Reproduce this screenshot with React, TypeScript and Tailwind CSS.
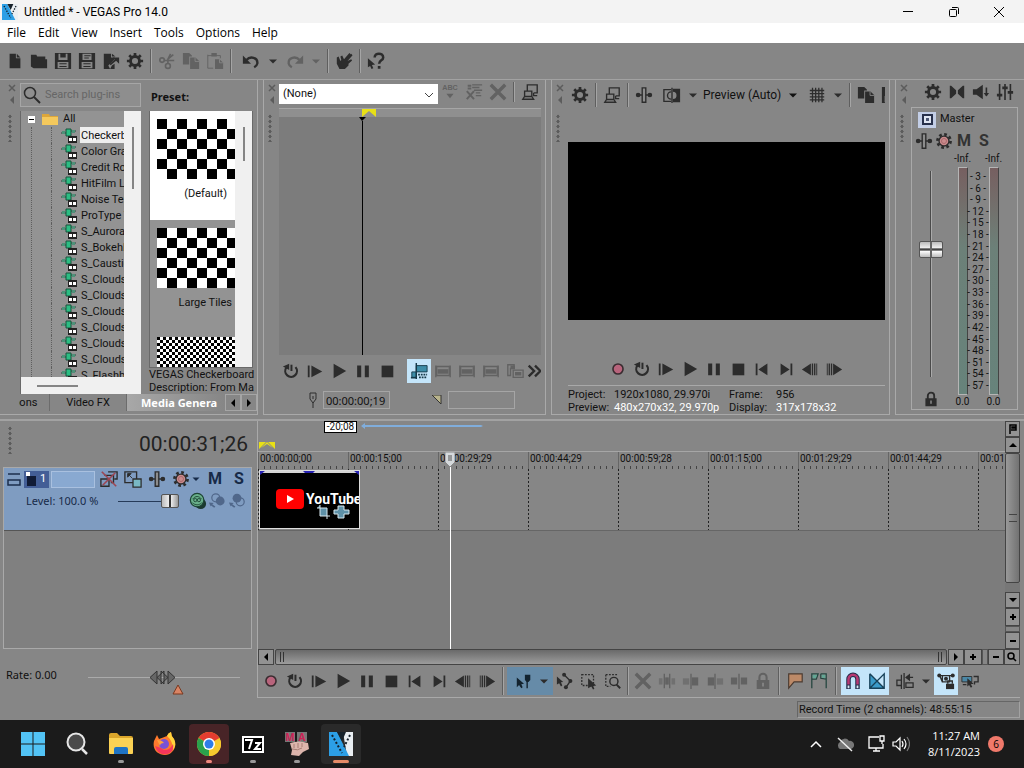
import { useState } from "react";
import type { ReactNode } from "react";
import clsx from "clsx";

const icons: Record<string, ReactNode> = {
  newFile: <path d="M4 2h7v5h5v11H4zM12 2l4 4h-4z" />,
  folder: <path d="M1 3h6l1 2h9v3H1zM1 7l2 1h16v10H4L1 16z" />,
  save: (
    <>
      <path fillRule="evenodd" d="M1 1h18v18H1zM5 2v7h10V2h-2v4H7V2zM4 11v7h12v-7z" />
      <path d="M8 2h3v3H8zM6 12.500h8v1.200H6zM6 15.500h8v1.200H6z" />
    </>
  ),
  saveAs: (
    <>
      <path fillRule="evenodd" d="M1 1h18v18H1zM5 2v7h10V2zM4 11v7h12v-7z" />
      <path d="M7 3.500h7v1.200H7zM7 6h5v1.200H7zM6 12.500h8v1.200H6zM6 15.500h8v1.200H6z" />
    </>
  ),
  render: (
    <>
      <path d="M2 2h8v4h4v2l-7 7 2 4H2zM11 2l4 3h-4zM11 15l3-2v6h-5z" />
      <path d="M9 14l7-6" stroke="currentColor" strokeWidth="2" />
      <path d="M12 6h7v7z" />
    </>
  ),
  gear: (
    <>
      <circle cx="10" cy="10" r="5" fill="none" stroke="currentColor" strokeWidth="3.2" />
      <path
        d="M10 1v4M10 15v4M1 10h4M15 10h4M3.600 3.600l2.800 2.800M13.600 13.600l2.800 2.800M3.600 16.400l2.800-2.800M13.600 6.400l2.800-2.800"
        stroke="currentColor"
        strokeWidth="3"
      />
    </>
  ),
  fxGear: (
    <>
      <circle cx="10" cy="10" r="7.300" fill="none" stroke="currentColor" strokeWidth="3" strokeDasharray="3 2.730" />
      <circle cx="10" cy="10" r="5.500" fill="#c98a8c" stroke="currentColor" strokeWidth="1.500" />
      <circle cx="10" cy="10" r="2.800" fill="none" stroke="#a5676a" />
    </>
  ),
  cut: (
    <g fill="none" stroke="currentColor" strokeWidth="1.800">
      <circle cx="4.500" cy="9" r="2.500" />
      <circle cx="11" cy="15.500" r="2.700" />
      <path d="M7 9.500h11M11 12.500V8l3-6M11 8l6-5" />
    </g>
  ),
  copy: (
    <>
      <path d="M1 1h7l3 3v1H8v9H1z" />
      <path d="M9 6h6l4 4v9H9z" />
      <path d="M14.500 6v4.500H19" stroke="#868686" fill="none" />
    </>
  ),
  paste: (
    <>
      <path d="M2 4h14v3M2 3v15h6" fill="none" stroke="currentColor" />
      <path d="M6 1h6v4H6zM10 8h5l4 4v7h-9z" />
      <path d="M15 8v4h4" stroke="#868686" fill="none" />
    </>
  ),
  undo: (
    <>
      <path d="M5 9c4-5 13-3 12 4-.300 2-2 3-3.500 4" fill="none" stroke="currentColor" strokeWidth="2.600" />
      <path d="M1 4v9h9z" />
    </>
  ),
  redo: (
    <>
      <path d="M15 9C11 4 2 6 3 13c.300 2 2 3 3.500 4" fill="none" stroke="currentColor" strokeWidth="2.600" />
      <path d="M19 4v9h-9z" />
    </>
  ),
  hand: (
    <path d="M2 6l2-1 2 5 1-1-1-4 2-1 2 4 6-7 1.500 1.500L13 8l5-6 1.500 1.500L14 10l4-2 1 1.500-4 3.500v2l-4 4H5l-3-6z" />
  ),
  help: (
    <>
      <path d="M8.500 6c0-5.500 9.500-5.500 9.500 0 0 3.500-4.500 3-4.500 7" fill="none" stroke="currentColor" strokeWidth="2.800" />
      <path d="M12 15.500h3v3h-3zM1 7l8 7-3.500.5 1.500 3.500-2 1L3.500 15.500 1 17z" />
    </>
  ),
  x: <path d="M2 2l16 16M18 2L2 18" stroke="currentColor" strokeWidth="3.800" />,
  abc: (
    <>
      <text x="10" y="8" textAnchor="middle" fontSize="8" fontWeight="bold" fontFamily="Liberation Sans, sans-serif">ABC</text>
      <path d="M6 12h8l-4 5z" />
    </>
  ),
  presetList: (
    <>
      <path d="M8 2h11M8 5h8M10 8h9M12 11h5M12 14h6" stroke="currentColor" strokeWidth="1.500" />
      <path d="M2 9l8 9M10 9l-8 9M3 3h4M3 6h4" stroke="currentColor" strokeWidth="2.200" />
    </>
  ),
  screens: (
    <g fill="none" stroke="currentColor" strokeWidth="1.500">
      <path d="M7 9V2h11v9h-4M14 11v3h4" />
      <path d="M4 9h8v6H4zM2 18h12l-2-3H4z" />
    </g>
  ),
  pin: (
    <>
      <path d="M2 10h16" stroke="currentColor" strokeWidth="1.500" />
      <path d="M8 2h4v16H8z" fill="#8c8c8c" stroke="currentColor" strokeWidth="1.500" />
      <circle cx="3.500" cy="10" r="2.600" />
      <circle cx="16.500" cy="10" r="2.600" />
    </>
  ),
  split: (
    <>
      <path d="M9 4H1v13h8" fill="none" stroke="currentColor" strokeWidth="1.500" />
      <path d="M11 3h8v15h-8v-3.500a4 4 0 000-8z" />
      <path d="M10 2v17M9 6.500a4 4 0 000 8" fill="none" stroke="currentColor" strokeWidth="1.500" />
    </>
  ),
  grid: <path d="M2 5h16M2 8.500h16M2 12h16M2 15.500h16M5 2v16M8.500 2v16M12 2v16M15.500 2v16" stroke="currentColor" strokeWidth="1.400" />,
  down: <path d="M5 8h10l-5 5z" />,
  record: <circle cx="10" cy="10" r="5.600" fill="#b8647c" stroke="#3a2c30" strokeWidth="1.800" />,
  loop: (
    <>
      <path d="M5 6a6.500 6.500 0 1010-.300" fill="none" stroke="currentColor" strokeWidth="2.400" />
      <path d="M10.500 3v7" stroke="currentColor" strokeWidth="2.200" />
      <path d="M1 5l7-3v7z" />
    </>
  ),
  playStart: <path d="M2 4h2v13H2zM6 4l12 6.500L6 17z" />,
  play: <path d="M4 2l14 8-14 8z" />,
  pause: <path d="M3.500 4h4.500v13H3.500zM12 4h4.500v13H12z" />,
  stop: <path d="M4 4h13v13H4z" />,
  toStart: <path d="M3 4h2v13H3zM16 4v13L6 10.500z" />,
  toEnd: <path d="M15 4h2v13h-2zM4 4v13l10-6.500z" />,
  prevFrame: <path d="M11 4v13L1 10.500zM12 4h1.500v13H12zM14.500 4H16v13h-1.500zM17 4h1v13h-1z" />,
  nextFrame: <path d="M9 4v13l10-6.500zM6.500 4H8v13H6.500zM4 4h1.500v13H4zM2 4h1v13H2z" />,
  speaker: (
    <>
      <path d="M1 7h4l7-5v16l-7-5H1z" />
      <path d="M16 5v9" stroke="currentColor" strokeWidth="1.800" />
      <path d="M13 11h6l-3 4z" />
    </>
  ),
  bowtie: <path d="M2 3h1.500l5.500 5v4l-5.500 5H2zM18 3h-1.500L11 8v4l5.500 5H18z" />,
  mixer: (
    <>
      <path d="M4 1v18M10 1v18M16 1v18" stroke="currentColor" strokeWidth="1.800" />
      <path d="M1 12h6v3H1zM7 4h6v3H7zM13 9h6v3h-6z" />
    </>
  ),
  lock: (
    <>
      <path d="M6 10V6a4 4 0 018 0v4" fill="none" stroke="currentColor" strokeWidth="2.300" />
      <path fillRule="evenodd" d="M3 9h14v10H3zM9 12v4h2v-4z" />
    </>
  ),
  syncCursor: (
    <>
      <path d="M2 11h5v6H2zM7 4h12v7H7z" fill="#3d8da8" stroke="#153848" />
      <path d="M7 1v18M1 17.500h6" stroke="#153848" strokeWidth="1.600" />
      <path d="M9 14h10M10 17h9" stroke="#153848" strokeWidth="2" strokeDasharray="2 1" />
    </>
  ),
  keyframe: (
    <>
      <path d="M3 5h14v10H3z" fill="none" stroke="currentColor" strokeWidth="1.400" />
      <path d="M2 4v13M18 4v13" stroke="currentColor" strokeWidth="1.500" />
      <path d="M4 8h12v5H4z" />
    </>
  ),
  keyCopy: (
    <>
      <path d="M2 3h7v4H5v8H2zM8 9h11v8H8z" fill="none" stroke="currentColor" strokeWidth="1.500" />
      <path d="M10 11h7v4h-7zM5 4h5v4H5z" />
    </>
  ),
  more: <path d="M3 4l6 6-6 6M10 4l6 6-6 6" fill="none" stroke="currentColor" strokeWidth="2.600" />,
  editTool: (
    <g fill="#13232f">
      <path d="M2 6l8 7-3 .5 1.500 3.500-1.500 1-2.500-3.500L2 17z" />
      <path d="M11 3h6v6l-2 2h-2l-2-2z" />
      <path d="M13.500 10v8" stroke="#13232f" strokeWidth="1.500" />
    </g>
  ),
  envTool: (
    <>
      <path d="M1 5l7 6-2.500.5 1.500 3.500-1.500 1-2-3.500L1 14z" />
      <path d="M9 3l7 7-5 7" fill="none" stroke="currentColor" strokeWidth="1.500" />
      <circle cx="9" cy="3" r="2.200" /><circle cx="16" cy="10" r="2.200" /><circle cx="11" cy="17" r="2.200" />
    </>
  ),
  selTool: (
    <>
      <path d="M2 3h13v12H2z" fill="none" stroke="currentColor" strokeWidth="1.400" strokeDasharray="2 1.500" />
      <path d="M9 7l9 8-3.500.5 1.500 3-1.500 1-2-3.500-3.500 2z" />
    </>
  ),
  zoomTool: (
    <>
      <path d="M2 3h14M2 3v13h5" fill="none" stroke="currentColor" strokeWidth="1.400" strokeDasharray="2 1.500" />
      <circle cx="11" cy="10.500" r="4.500" fill="none" stroke="currentColor" strokeWidth="1.600" />
      <path d="M14 14l4 4" stroke="currentColor" strokeWidth="2.200" />
    </>
  ),
  trim: (
    <>
      <path d="M7 2v16M13 2v16" stroke="currentColor" strokeWidth="1.500" />
      <path d="M8 6h4v8H8z" />
      <path d="M1 7h4v7H1zM15 7h4v7h-4z" opacity=".6" />
    </>
  ),
  trimStart: (
    <>
      <path d="M10 2v17" stroke="currentColor" strokeWidth="1.500" />
      <path d="M11 6h7v9h-7z" /><path d="M1 7h7v7H1z" opacity=".6" />
    </>
  ),
  trimEnd: (
    <>
      <path d="M10 2v17" stroke="currentColor" strokeWidth="1.500" />
      <path d="M2 6h7v9H2z" /><path d="M12 7h7v7h-7z" opacity=".6" />
    </>
  ),
  cutEvent: (
    <>
      <path d="M10 2v17" stroke="currentColor" strokeWidth="1.500" />
      <path d="M1 6h7v8H1zM12 6h7v8h-7z" />
    </>
  ),
  marker: <path d="M3 2h15v9H9l-6 7z" fill="#bd8a68" stroke="#4a3a30" strokeWidth="1.300" />,
  region: (
    <>
      <path d="M2 18V2h7l-2 6H2zM12 2h6v16M12 2v5l6 1" fill="none" stroke="#24453f" strokeWidth="1.400" />
      <path d="M3 3h5l-1.500 4H3zM13 3h4v4l-4-1z" fill="#62a794" />
    </>
  ),
  magnet: (
    <>
      <path d="M5 19V8a5 5 0 0110 0v11" fill="none" stroke="#222e4c" strokeWidth="5" />
      <path d="M5 14V8a5 5 0 0110 0v6" fill="none" stroke="#b73872" strokeWidth="2.800" />
      <path d="M4 15h2v3H4zM14 15h2v3h-2z" fill="#dbe8f4" />
    </>
  ),
  crossfade: (
    <>
      <path d="M2 2v16h16z" fill="#3b9bc9" />
      <path d="M2 2v16h16V2L2 18M2 2l16 16" fill="none" stroke="#174158" strokeWidth="1.500" />
    </>
  ),
  ripple: (
    <>
      <path d="M1 9h5v6H1zM11 12h8v5h-8zM6 3v16M9 1v18" fill="none" stroke="currentColor" strokeWidth="1.400" />
      <path d="M11 6h8M11 6l4-3v6z" stroke="currentColor" strokeWidth="1.200" />
    </>
  ),
  lockEnv: (
    <>
      <path d="M1 4h18M6 4h8v7H6zM3 4l3 7" fill="none" stroke="currentColor" strokeWidth="1.500" />
      <circle cx="2.500" cy="4" r="2.200" /><circle cx="17.500" cy="4" r="2.200" /><circle cx="10" cy="7.500" r="2.200" />
      <path d="M10 13h9v6h-9z" />
      <path d="M12 13v-3h5v3" fill="none" stroke="currentColor" strokeWidth="1.500" />
    </>
  ),
  ignoreGroup: (
    <>
      <path d="M1 5h11v6H1z" fill="#4b87a5" stroke="currentColor" />
      <path d="M14 5h5v6h-4v3M2 14h4" fill="none" stroke="currentColor" strokeWidth="1.500" />
      <path d="M7 7l7 6-3 .5 1.500 3-1.500 1-2-3-2 1.500z" />
    </>
  ),
  bypass: (
    <>
      <path d="M9 2h10v8h-3M5 6h10v8h-3M1 10h9v8H1z" fill="none" stroke="currentColor" strokeWidth="1.500" />
      <path d="M2 2l16 16M17 3L3 17" stroke="#9c4653" strokeWidth="1.800" />
    </>
  ),
  motion: (
    <>
      <path d="M1 2h13v12H1z" fill="none" stroke="currentColor" strokeWidth="1.500" />
      <path d="M10 10h9v9h-9z" fill="#79b8c4" stroke="currentColor" strokeWidth="1.400" />
      <path d="M4 4h4L4 8zM5 5l4 4" stroke="currentColor" />
    </>
  ),
  compose: (
    <>
      <circle cx="13" cy="13" r="6" fill="#1b3930" />
      <circle cx="9" cy="9" r="7.500" fill="#69b08b" stroke="#1d4436" strokeWidth="1.400" />
      <path d="M4 8c3-4 7-4 10 0M4 12c3 3 7 3 10 0" fill="none" stroke="#1d4436" />
      <circle cx="7" cy="9" r="1.800" fill="none" stroke="#1d4436" /><circle cx="11" cy="9" r="1.800" fill="none" stroke="#1d4436" />
    </>
  ),
  parent: (
    <>
      <circle cx="8.500" cy="6" r="5" fill="none" stroke="currentColor" strokeWidth="1.500" />
      <circle cx="14" cy="10" r="5.500" />
      <path d="M0 12l6 .500-2 1.500 4 3-1.500 1.500-4-3L2 17z" />
    </>
  ),
  child: (
    <>
      <circle cx="14" cy="11" r="5" fill="none" stroke="currentColor" strokeWidth="1.500" />
      <circle cx="10" cy="6.500" r="5.500" />
      <path d="M0 12l6 .500-2 1.500 4 3-1.500 1.500-4-3L2 17z" />
    </>
  ),
};

function Glyph({ name, className = "size-5" }: { name: string; className?: string }) {
  return (
    <svg viewBox="0 0 20 20" fill="currentColor" aria-hidden="true" className={clsx("shrink-0", className)}>
      {icons[name]}
    </svg>
  );
}

type ToolProps = { name: string; label: string; off?: boolean; on?: boolean; className?: string };

function Tool({ name, label, off, on, className = "w-6" }: ToolProps) {
  return (
    <button
      type="button"
      aria-label={label}
      disabled={off}
      className={clsx(
        "flex h-6 shrink-0 items-center justify-center",
        off ? "text-[#626262]" : "text-[#2c2c2c]",
        on && "bg-[#c4e5fa]",
        className
      )}
    >
      <Glyph name={name} className={name === "down" ? "size-4" : "size-[18px]"} />
    </button>
  );
}

function Sep({ className = "mx-[3px] h-6" }: { className?: string }) {
  return <span className={clsx("w-[2px] shrink-0 border-l border-[#5f5f5f] bg-[#a5a5a5]", className)} />;
}

function Dots({ className }: { className?: string }) {
  return (
    <span className={clsx("h-7 w-1 bg-[radial-gradient(#5c5c5c_50%,transparent_60%)] bg-[length:4px_5px]", className)} />
  );
}

function Grip() {
  return (
    <div className="flex w-[15px] shrink-0 flex-col items-start pl-1 pt-1 text-[#5c5c5c]">
      <button type="button" aria-label="Close panel">
        <svg viewBox="0 0 8 8" className="size-2">
          <path d="M1 1l6 6M7 1L1 7" stroke="currentColor" strokeWidth="1.500" />
        </svg>
      </button>
      <button type="button" aria-label="Collapse panel" className="mt-1">
        <svg viewBox="0 0 8 8" fill="currentColor" className="size-2">
          <path d="M6 0v8L2 4z" />
        </svg>
      </button>
      <Dots className="mt-2.5" />
    </div>
  );
}

const plugins = [
  "Checkerboard", "Color Gradient", "Credit Roll", "HitFilm Light", "Noise Texture", "ProType Titler",
  "S_Aurora", "S_BokehLights", "S_Caustics", "S_Clouds", "S_CloudsColor", "S_CloudsMult", "S_CloudsPers",
  "S_CloudsPsyko", "S_CloudsVortex", "S_Flashbulbs",
];

function PluginIcon() {
  return (
    <svg viewBox="0 0 16 16" className="size-4 shrink-0">
      <path d="M0 6h5M10 4h5" stroke="#25463b" />
      <path d="M1 4h3v3H1zM11 3h3v3h-3z" fill="#4f9179" />
      <path d="M5 2h5v7H5z" fill="#2bbd83" stroke="#17543d" />
      <path d="M7 9h9v7H7z" fill="#222" />
      <path d="M8 11h3v3H8zM12 11h3v3h-3z" fill="#fff" />
    </svg>
  );
}

function PluginPanel() {
  const [selected, setSelected] = useState("Checkerboard");

  return (
    <section className="mb-1 flex w-[258px] shrink-0 border-r border-b border-[#a9a9a9] pl-1">
      <Grip />
      <div className="flex min-w-0 flex-1 flex-col">
        <div className="flex min-h-0 flex-1 gap-2 pl-px pr-1 pt-[3px]">
          <div className="flex w-[121px] shrink-0 flex-col gap-1">
            <label className="flex h-6 shrink-0 items-center border border-[#a6a6a6] bg-[#8e8e8e] pl-0.5">
              <svg viewBox="0 0 18 18" className="size-[18px] shrink-0" fill="none" stroke="#2c2c2c">
                <circle cx="7" cy="7" r="5.500" strokeWidth="1.500" />
                <path d="M11 11l6 6" strokeWidth="2" />
              </svg>
              <input
                type="search"
                aria-label="Search plug-ins"
                placeholder="Search plug-ins"
                className="ml-1 w-full min-w-0 bg-transparent text-[11px] outline-none placeholder:text-[#666]"
              />
            </label>
            <div className="flex min-h-0 flex-1 flex-col border-l border-[#696969]">
              <div className="flex min-h-0 flex-1">
                <div className="min-w-0 flex-1 overflow-hidden bg-[#939393]">
                  <div className="flex h-4 items-center pl-[7px]">
                    <span className="flex h-[7px] w-[7px] items-center bg-white">
                      <span className="mx-px h-px flex-1 bg-black" />
                    </span>
                    <svg viewBox="0 0 18 14" className="ml-1.5 h-3.5 w-[18px]">
                      <path d="M1 2h7l1 2h8v9H1z" fill="#dda63a" />
                      <path d="M1 5h16v8H1z" fill="#f5c95d" />
                    </svg>
                    <span className="ml-1">All</span>
                  </div>
                  <ul className="ml-2.5 border-l border-dotted border-[#5e5e5e] pl-[19px]">
                    {plugins.map((name) => (
                      <li key={name} className="border-l border-dotted border-[#5e5e5e]">
                        <button
                          type="button"
                          onClick={() => setSelected(name)}
                          className="flex h-4 items-center whitespace-nowrap pl-[9px]"
                        >
                          <PluginIcon />
                          <span className={clsx("ml-[3px] h-4 px-px leading-[17px]", selected === name && "bg-[#eee]")}>{name}</span>
                        </button>
                      </li>
                    ))}
                  </ul>
                </div>
                <div className="w-[17px] shrink-0 bg-[#f0f0f0] pt-4">
                  <div className="mx-auto h-[62px] w-0.5 bg-[#858585]" />
                </div>
              </div>
              <div className="h-[17px] shrink-0 bg-[#f0f0f0] pt-2">
                <div className="ml-4 h-0.5 w-[41px] bg-[#858585]" />
              </div>
            </div>
          </div>
          <div className="flex min-w-0 flex-1 flex-col">
            <h2 className="h-7 shrink-0 pl-0.5 font-['Noto_Sans',sans-serif] font-bold leading-7">Preset:</h2>
            <div className="flex min-h-0 flex-1 border border-t-0 border-[#696969]">
              <div className="min-w-0 flex-1 overflow-hidden bg-[#939393]">
                <button type="button" className="flex h-[109px] w-full flex-col bg-white pl-[7px] pt-2">
                  <span className="h-[60px] w-full bg-[conic-gradient(#fff_25%,#000_0_50%,#fff_0_75%,#000_0)] bg-[length:20px_20px]" />
                  <span className="mt-[5px] self-end pr-2 leading-5">(Default)</span>
                </button>
                <button type="button" className="flex h-[109px] w-full flex-col pl-[7px] pt-2">
                  <span className="h-[60px] w-full bg-[conic-gradient(#fff_25%,#000_0_50%,#fff_0_75%,#000_0)] bg-[length:20px_20px]" />
                  <span className="mt-[5px] self-end pr-[3px] leading-5">Large Tiles</span>
                </button>
                <button type="button" aria-label="Small Tiles" className="flex w-full flex-col pl-[7px] pt-2">
                  <span className="h-[60px] w-full bg-[conic-gradient(#fff_25%,#000_0_50%,#fff_0_75%,#000_0)] bg-[length:6px_6px]" />
                </button>
              </div>
              <div className="w-[17px] shrink-0 bg-[#f0f0f0] pt-4">
                <div className="mx-auto h-[34px] w-0.5 bg-[#858585]" />
              </div>
            </div>
            <p className="h-[26px] shrink-0 whitespace-nowrap leading-[13px]">
              VEGAS Checkerboard
              <br />
              Description: From Ma
            </p>
          </div>
        </div>
        <div className="mb-[3px] flex h-[17px] shrink-0 items-stretch overflow-hidden">
          <button type="button" className="-ml-3 w-[43px] shrink-0 overflow-hidden border-r border-[#6c6c6c] text-left leading-4">
            bbons
          </button>
          <button type="button" className="w-[77px] shrink-0 border-r border-[#6c6c6c] leading-4">Video FX</button>
          <button type="button" className="min-w-0 flex-1 overflow-hidden whitespace-nowrap bg-linear-to-r from-[#a8a8a8] to-[#868686] pl-3.5 text-left font-['Noto_Sans',sans-serif] font-bold leading-4 text-white">
            Media Genera
          </button>
          <button type="button" aria-label="Previous tabs" className="w-4 border border-[#a5a5a5]">
            <svg viewBox="0 0 8 8" className="mx-auto size-2"><path d="M6 0v8L2 4z" /></svg>
          </button>
          <button type="button" aria-label="Next tabs" className="w-4 border border-[#a5a5a5]">
            <svg viewBox="0 0 8 8" className="mx-auto size-2"><path d="M2 0v8l4-4z" /></svg>
          </button>
        </div>
      </div>
    </section>
  );
}

function EffectPanel() {
  return (
    <section className="mb-1 ml-[5px] flex w-[283px] shrink-0 border border-t-0 border-[#a9a9a9]">
      <Grip />
      <div className="flex min-w-0 flex-1 flex-col pr-1">
        <div className="flex h-6 items-center">
          <div className="relative mt-1 w-[159px] shrink-0">
            <select aria-label="Preset" className="block h-5 w-full appearance-none bg-white pl-1 text-[11px] outline-none">
              <option>(None)</option>
            </select>
            <svg viewBox="0 0 10 6" className="pointer-events-none absolute right-1 top-2 h-1.5 w-2.5" fill="none" stroke="#444">
              <path d="M1 1l4 4 4-4" />
            </svg>
          </div>
          <Tool name="abc" label="Rename preset" off />
          <Tool name="presetList" label="Preset list" off />
          <Tool name="x" label="Delete preset" off />
          <Sep className="mx-[3px] h-5" />
          <Tool name="screens" label="Preview on external monitor" />
        </div>
        <div className="mt-1 flex h-[9px] shrink-0 border-t border-[#a6a6a6] bg-[#8f8f8f] pl-[83px]">
          <svg viewBox="0 0 14 8" className="h-2 w-3.5"><path d="M0 0h14v8L7 2 0 8z" fill="#e8e016" /></svg>
        </div>
        <div className="flex min-h-0 flex-1 bg-[#7c7c7c] pl-[80px]">
          <div className="flex w-[7px] flex-col items-center">
            <svg viewBox="0 0 7 4" className="h-1 w-[7px]"><path d="M0 0h7L3 4z" /></svg>
            <div className="w-px flex-1 bg-black" />
          </div>
        </div>
        <div className="flex h-8 shrink-0 items-center overflow-hidden">
          <Tool name="loop" label="Loop playback" />
          <Tool name="playStart" label="Play from start" />
          <Tool name="play" label="Play" />
          <Tool name="pause" label="Pause" />
          <Tool name="stop" label="Stop" />
          <Tool name="syncCursor" label="Sync cursor" on className="ml-2 w-6" />
          <Tool name="keyframe" label="First keyframe" off />
          <Tool name="keyframe" label="Previous keyframe" off />
          <Tool name="keyframe" label="Next keyframe" off />
          <Tool name="keyCopy" label="Copy keyframe" off />
          <Tool name="more" label="More" className="w-4" />
        </div>
        <div className="mb-px flex h-[26px] shrink-0 items-center pl-7">
          <svg viewBox="0 0 12 16" className="h-4 w-3" fill="none" stroke="#2c2c2c">
            <path d="M3 1h6v6L6 11 3 7zM6 4v3M6 11v5" />
          </svg>
          <input aria-label="Cursor position" defaultValue="00:00:00;19" className="ml-1 h-[18px] w-[67px] border border-[#a5a5a5] bg-transparent px-0.5 font-['Noto_Sans',sans-serif] text-[11px]" />
          <svg viewBox="0 0 10 10" className="ml-[42px] size-2.5"><path d="M0 0h9v9z" fill="#b9b48c" stroke="#333" /></svg>
          <input aria-label="Keyframe value" className="ml-1.5 h-[18px] w-[67px] border border-[#a5a5a5] bg-transparent px-0.5 text-[11px]" />
        </div>
      </div>
    </section>
  );
}

const transport: [string, string][] = [
  ["record", "Record"], ["loop", "Loop playback"], ["playStart", "Play from start"], ["play", "Play"], ["pause", "Pause"],
  ["stop", "Stop"], ["toStart", "Go to start"], ["toEnd", "Go to end"], ["prevFrame", "Previous frame"], ["nextFrame", "Next frame"],
];

function Transport() {
  return transport.map(([name, label]) => <Tool key={name} name={name} label={label} />);
}

function PreviewPanel() {
  return (
    <section className="mb-1 ml-[5px] flex min-w-0 flex-1 border border-t-0 border-[#a9a9a9]">
      <Grip />
      <div className="flex min-w-0 flex-1 flex-col pl-px pr-1">
        <div className="flex h-[30px] shrink-0 items-center overflow-hidden">
          <Tool name="gear" label="Project video properties" />
          <Sep />
          <Tool name="screens" label="External monitor" />
          <Sep />
          <Tool name="pin" label="Video output FX" />
          <Tool name="split" label="Split screen view" className="ml-1 w-6" />
          <Tool name="down" label="Split screen menu" className="ml-px w-4" />
          <button type="button" className="ml-0.5 flex shrink-0 items-center whitespace-nowrap text-xs">
            Preview (Auto)
            <Glyph name="down" className="ml-1 size-4" />
          </button>
          <Tool name="grid" label="Overlays" className="ml-1 w-6" />
          <Tool name="down" label="Overlays menu" className="w-[17px]" />
          <Sep />
          <Tool name="copy" label="Copy snapshot" />
          <Tool name="save" label="Save snapshot" />
        </div>
        <div className="mt-8 min-h-0 flex-1 bg-black" />
        <div className="flex h-[65px] shrink-0 items-center justify-center pr-0.5 pt-8"><Transport /></div>
        <dl className="grid shrink-0 grid-cols-[46px_115px_47px_1fr] whitespace-nowrap border-t border-[#a9a9a9] pt-0.5 leading-[13px]">
          <dt>Project:</dt><dd>1920x1080, 29.970i</dd>
          <dt>Frame:</dt><dd>956</dd>
          <dt>Preview:</dt><dd className="text-white">480x270x32, 29.970p</dd>
          <dt>Display:</dt><dd className="text-white">317x178x32</dd>
        </dl>
      </div>
    </section>
  );
}

const scale = Array.from({ length: 19 }, (_, i) => (i + 1) * 3);

function Meter() {
  return (
    <div className="flex w-[31px] flex-col items-center">
      <span className="h-4 text-[10px] leading-4">-Inf.</span>
      <div className="w-2.5 flex-1 border border-[#b5b5b5] border-r-[#444] bg-linear-to-b from-[#765f60] via-[#6c8078] via-35% to-[#67837b]" />
      <span className="h-3.5 text-[10px] leading-3.5">0.0</span>
    </div>
  );
}

function MasterPanel() {
  return (
    <section className="mb-1 ml-[5px] flex w-[129px] shrink-0 border-b border-l border-[#a9a9a9]">
      <Grip />
      <div className="mr-1.5 flex min-w-0 flex-1 flex-col">
        <div className="flex h-[27px] shrink-0 items-start justify-center pl-2">
          <Tool name="gear" label="Audio properties" />
          <Tool name="bowtie" label="Downmix output" />
          <Tool name="speaker" label="Dim output" />
          <Tool name="mixer" label="Open mixing console" />
        </div>
        <div className="mb-1 flex min-h-0 flex-1 flex-col border border-[#a9a9a9] pl-0.5">
          <div className="flex h-[23px] shrink-0 items-center pl-1">
            <span className="mr-1 flex h-4 w-[18px] items-center justify-center bg-[#c3cee6]">
              <span className="size-[11px] border-2 border-[#27304b] bg-[#dfe5f2] p-0.5"><span className="block size-[3px] bg-[#4c5672]" /></span>
            </span>
            Master
          </div>
          <div className="flex h-5 shrink-0 items-center">
            <Tool name="pin" label="Master FX" className="w-5" />
            <Tool name="fxGear" label="Automation settings" className="w-5" />
            <button type="button" className="w-5 text-base font-bold leading-5 text-[#333]">M</button>
            <button type="button" className="w-5 text-base font-bold leading-5 text-[#333]">S</button>
          </div>
          <div className="flex min-h-0 flex-1">
            <div className="flex w-[33px] flex-col items-center pl-px pt-5">
              <input
                type="range"
                aria-label="Master volume"
                min={0}
                max={100}
                defaultValue={63}
                className="min-h-0 w-6 flex-1 appearance-none bg-[linear-gradient(90deg,#4a4a4a_50%,#aaa_50%)] bg-[length:2px_100%] bg-center bg-no-repeat [direction:rtl] [writing-mode:vertical-lr] [&::-webkit-slider-thumb]:h-[17px] [&::-webkit-slider-thumb]:w-6 [&::-webkit-slider-thumb]:appearance-none [&::-webkit-slider-thumb]:rounded-xs [&::-webkit-slider-thumb]:border [&::-webkit-slider-thumb]:border-[#555] [&::-webkit-slider-thumb]:bg-[linear-gradient(90deg,transparent_46%,#666_46%_54%,transparent_54%),linear-gradient(#bbb,#f0f0f0_40%,#444_45%,#444_55%,#fff_60%,#bbb)]"
              />
              <button type="button" aria-label="Lock faders" className="mb-0.5 mt-3.5 text-[#2c2c2c]">
                <Glyph name="lock" className="size-4" />
              </button>
            </div>
            <div className="flex min-w-0 flex-1">
              <Meter />
              <ul className="-mx-3 mb-[18px] mt-5 flex w-6 flex-col justify-between text-[10px] leading-[11px]">
                {scale.map((n) => (
                  <li key={n} className="text-center whitespace-nowrap">{`- ${n} -`}</li>
                ))}
              </ul>
              <Meter />
            </div>
          </div>
        </div>
      </div>
    </section>
  );
}

function TrackList() {
  return (
    <aside className="flex w-[258px] shrink-0 flex-col border-r border-[#a9a9a9] pl-[3px]">
      <div className="flex h-[46px] shrink-0 items-center justify-between pl-[5px] pr-[9px]">
        <Dots className="-mt-2" />
        <output className="text-[21px] leading-7 text-[#222]">00:00:31;26</output>
      </div>
      <div className="mr-[5px] flex min-h-0 flex-1 flex-col border border-[#a9a9a9]">
        <div className="h-[63px] shrink-0 border-b border-[#555] bg-[#7f9cc1] text-[#172a48]">
          <div className="flex h-[22px] items-center">
            <svg viewBox="0 0 14 16" className="ml-[3px] h-4 w-3.5" fill="none" stroke="#1c2e4c" strokeWidth="1.500">
              <path d="M1 3h12M1 9h12v5H1z" />
            </svg>
            <span className="ml-[3px] flex h-[17px] w-[25px] items-center gap-1 bg-[#435e96] pl-0.5 text-white">
              <svg viewBox="0 0 10 14" className="h-3.5 w-2.5">
                <path d="M1 4h9v10H1z" fill="#101b35" />
                <path d="M0 0h4v4H0z" fill="#fff" />
              </svg>
              1
            </span>
            <input aria-label="Track name" className="ml-0.5 h-[17px] w-11 border border-[#a9c0df] bg-[#89a9d1] px-1" />
            <Tool name="bypass" label="Bypass motion blur" className="ml-0.5 w-6" />
            <Tool name="motion" label="Track motion" />
            <Tool name="pin" label="Track FX" />
            <Tool name="fxGear" label="Automation settings" />
            <Glyph name="down" className="-ml-1 size-3.5" />
            <button type="button" className="w-6 text-base font-bold leading-5">M</button>
            <button type="button" className="w-6 text-base font-bold leading-5">S</button>
          </div>
          <div className="flex h-[22px] items-center pl-[22px]">
            <label htmlFor="level" className="w-[92px] whitespace-nowrap font-['Noto_Sans',sans-serif]">Level: 100.0 %</label>
            <input
              id="level"
              type="range"
              defaultValue={100}
              className="h-3.5 w-[61px] appearance-none bg-[linear-gradient(#263b59,#263b59)] bg-[length:100%_1px] bg-center bg-no-repeat [&::-webkit-slider-thumb]:h-3.5 [&::-webkit-slider-thumb]:w-[18px] [&::-webkit-slider-thumb]:appearance-none [&::-webkit-slider-thumb]:rounded-xs [&::-webkit-slider-thumb]:border [&::-webkit-slider-thumb]:border-[#555] [&::-webkit-slider-thumb]:bg-[linear-gradient(90deg,#bbb,#eee_44%,#333_45%,#333_55%,#eee_56%,#999)]"
            />
            <button type="button" aria-label="Compositing mode" className="ml-2.5 flex w-5 shrink-0"><Glyph name="compose" className="size-[18px]" /></button>
            <button type="button" aria-label="Make compositing parent" className="flex w-5 shrink-0 text-[#50678a]"><Glyph name="parent" className="size-4" /></button>
            <button type="button" aria-label="Make compositing child" className="flex w-5 shrink-0 text-[#50678a]"><Glyph name="child" className="size-4" /></button>
          </div>
        </div>
        <div className="flex-1 bg-[#808080]" />
      </div>
      <div className="flex h-[49px] shrink-0 items-center pl-[3px] pt-1">
        <span className="w-[82px] font-['Noto_Sans',sans-serif]">Rate: 0.00</span>
        <svg viewBox="0 0 154 28" className="mt-2.5 h-7 w-[154px]" fill="none">
          <path d="M0 10.500h152" stroke="#aaa" />
          <path d="M69 4v13l-7-6.500zM76 4v13l-7-6.500zM73 4v13l7-6.500zM80 4v13l7-6.500z" fill="#666" stroke="#333" />
          <path d="M90 18l5 9H85z" fill="#d98464" stroke="#78381f" />
        </svg>
      </div>
    </aside>
  );
}

const marks = [
  "00:00:00;00", "00:00:15;00", "00:00:29;29", "00:00:44;29", "00:00:59;28", "00:01:15;00", "00:01:29;29", "00:01:44;29",
  "00:01:59;28",
];

function BarButton({ label, children, className }: { label: string; children: ReactNode; className?: string }) {
  return (
    <button
      type="button"
      aria-label={label}
      className={clsx("flex shrink-0 items-center justify-center border border-[#444] bg-[#929292]", className)}
    >
      <svg viewBox="0 0 10 10" className="size-2.5">{children}</svg>
    </button>
  );
}

const plus = <path d="M4 2h2v2h2v2H6v2H4V6H2V4h2z" />;
const minus = <path d="M2 4h6v2H2z" />;
const lens = <path d="M6 6l3 3M7 4a3 3 0 11-6 0 3 3 0 016 0z" fill="none" stroke="#000" strokeWidth="1.500" />;

function Clip() {
  return (
    <div className="flex h-[59px] w-[101px] flex-col overflow-hidden border border-[#ddd] bg-black">
      <svg viewBox="0 0 99 4" className="h-1 w-[99px] shrink-0">
        <path d="M0 0h99v2H0z" fill="#d5d5d5" />
        <path d="M0 0h5L0 4zM99 0h-5l5 4zM43 0h12l-2 2h-8z" fill="#2722b3" />
      </svg>
      <div className="flex items-center pl-4 pt-3.5">
        <svg viewBox="0 0 28 20" className="h-5 w-7 shrink-0">
          <rect width="28" height="20" rx="4" fill="#f00" />
          <path d="M11 6l7 4-7 4z" fill="#fff" />
        </svg>
        <span className="ml-0.5 font-['Roboto',sans-serif] text-sm font-bold leading-5 text-white">YouTube</span>
      </div>
      <svg viewBox="0 0 34 14" className="-mt-1 ml-14 h-3.5 w-[34px] shrink-0" fill="#5e91a8" stroke="#d7e7ee">
        <path d="M1 3h3V0M4 3h7v8H4zM11 11v3M11 11h3" />
        <path d="M18 5h4V1h6v4h5v4h-5v4h-6V9h-4z" />
      </svg>
    </div>
  );
}

function Timeline() {
  return (
    <div className="flex min-w-0 flex-1 flex-col">
      <div className="flex min-h-0 flex-1">
        <div className="relative flex min-w-0 flex-1 flex-col overflow-hidden">
          <div className="flex h-4 shrink-0 items-center pl-[66px]">
            <span className="-mt-1 flex h-3 w-[33px] items-center justify-center border border-black bg-white text-[10px] leading-none">-20;08</span>
            <svg viewBox="0 0 122 6" className="-mt-1.5 ml-1 h-1.5 w-[122px]"><path d="M0 3l4-3v2h116l2 1-2 1H4v2z" fill="#80addb" /></svg>
          </div>
          <div className="flex h-[15px] shrink-0 items-end border-b border-[#a6a6a6] pl-px">
            <svg viewBox="0 0 16 8" className="mb-0.5 h-2 w-4"><path d="M0 1h7L0 8zM9 1h7v7zM2 7l6-6 6 6-6-4z" fill="#e8e016" /></svg>
          </div>
          <div className="flex h-[17px] shrink-0 overflow-hidden">
            {marks.map((time) => (
              <div key={time} className="flex w-[90px] shrink-0 flex-col justify-between overflow-hidden border-l border-[#666] pl-px">
                <span className="whitespace-nowrap text-[10px] leading-[13px] text-[#111]">{time}</span>
                <span className="-ml-0.5 h-[3px] shrink-0 bg-[repeating-linear-gradient(90deg,#444_0_1px,transparent_1px_6px)]" />
              </div>
            ))}
          </div>
          <div className="relative flex h-[62px] shrink-0 items-center overflow-hidden border-b border-[#666]">
            <div className="flex h-full">
              {marks.map((time) => (
                <div
                  key={time}
                  className="h-full w-[90px] shrink-0 bg-[linear-gradient(#222_50%,transparent_50%)] bg-[length:1px_4px] bg-left-top bg-repeat-y"
                />
              ))}
            </div>
            <div className="absolute left-px top-px"><Clip /></div>
          </div>
          <div className="min-h-0 flex-1 bg-[#7c7c7c]" />
          <div className="absolute bottom-0 left-[187px] top-[31px] flex w-[10px] flex-col items-center">
            <svg viewBox="0 0 10 15" className="h-[15px] w-2.5 shrink-0">
              <path d="M0 0h10v10l-5 5-5-5z" fill="#d5d9dc" stroke="#888" />
              <path d="M4 3v6M6 3v6" stroke="#555" />
            </svg>
            <div className="w-0.5 flex-1 bg-linear-to-r from-transparent from-50% to-white to-50%" />
          </div>
        </div>
        <div className="mr-1 flex w-[15px] shrink-0 flex-col">
          <BarButton label="Markers" className="h-4"><path d="M2 10V1h6v5H3M4 3h3v1H4z" fill="none" stroke="#000" strokeWidth="1.500" /></BarButton>
          <BarButton label="Scroll up" className="h-4"><path d="M1 7h8L5 3z" /></BarButton>
          <div className="flex h-[130px] shrink-0 flex-col items-center justify-center rounded-xs border border-[#444] bg-linear-to-r from-[#999] to-[#727272]">
            <span className="h-2 w-2 border-y border-[#444]" />
          </div>
          <div className="flex-1 bg-[#777]" />
          <BarButton label="Scroll down" className="h-4"><path d="M1 3h8L5 7z" /></BarButton>
          <BarButton label="Zoom in height" className="h-[18px]">{plus}</BarButton>
          <div className="h-1.5 border border-[#555]" />
          <BarButton label="Zoom out height" className="h-[17px]">{minus}</BarButton>
        </div>
      </div>
      <div className="mr-1 flex h-4 shrink-0">
        <BarButton label="Scroll left" className="w-4"><path d="M7 1v8L3 5z" /></BarButton>
        <div className="mx-px flex flex-1 items-center justify-between rounded-xs border border-[#444] bg-linear-to-b from-[#6a6a6a] to-[#9c9c9c] px-1">
          <span className="h-2.5 w-1 border-x border-[#333]" />
          <span className="h-2.5 w-1 border-x border-[#333]" />
        </div>
        <BarButton label="Scroll right" className="w-4"><path d="M3 1v8l4-4z" /></BarButton>
        <BarButton label="Zoom in time" className="w-[18px]">{plus}</BarButton>
        <span className="w-1.5 border border-[#555]" />
        <BarButton label="Zoom out time" className="w-4">{minus}</BarButton>
        <BarButton label="Zoom tool" className="w-4">{lens}</BarButton>
      </div>
      <div className="mr-1 flex h-[33px] shrink-0 items-center overflow-hidden border-b border-[#a9a9a9] pl-px">
        <Transport />
        <Sep className="mx-[3px] h-7" />
        <div className="flex h-7 shrink-0 items-center bg-[#668ba8] pl-[5px] pr-px">
          <Tool name="editTool" label="Normal edit tool" />
          <Tool name="down" label="Edit tool menu" className="w-4" />
        </div>
        <Tool name="envTool" label="Envelope edit tool" />
        <Tool name="selTool" label="Selection edit tool" />
        <Tool name="zoomTool" label="Zoom edit tool" />
        <Sep className="mx-0.5 h-7" />
        <Tool name="x" label="Delete" off />
        <Tool name="trim" label="Trim" off />
        <Tool name="trimStart" label="Trim start" off />
        <Tool name="trimEnd" label="Trim end" off />
        <Tool name="cutEvent" label="Split" off />
        <Tool name="lock" label="Lock" off />
        <Sep className="mx-[3px] h-7" />
        <Tool name="marker" label="Insert marker" />
        <Tool name="region" label="Insert region" />
        <Sep className="mx-1 h-7" />
        <Tool name="magnet" label="Enable snapping" on className="h-7 w-6" />
        <Tool name="crossfade" label="Automatic crossfades" on className="h-7 w-6" />
        <Tool name="ripple" label="Auto ripple" className="ml-1 w-6" />
        <Tool name="down" label="Auto ripple menu" className="w-[17px]" />
        <Tool name="lockEnv" label="Lock envelopes to events" on className="h-7 w-6" />
        <Tool name="ignoreGroup" label="Ignore event grouping" />
      </div>
    </div>
  );
}

function VegasLogo({ className }: { className?: string }) {
  return (
    <svg viewBox="0 0 24 24" className={className}>
      <path d="M14 0h10v24h-6z" fill="#e9eef2" />
      <path d="M0 0h8l12 24H0z" fill="#2c9fe6" />
      <path d="M8 0h9l-4 9z" fill="#17222b" />
      <path d="M3 3l10 18M21 3l-6 12" stroke="#14202b" strokeWidth="2" strokeDasharray="2 2" />
    </svg>
  );
}

function TitleBar() {
  return (
    <header className="flex h-[23px] shrink-0 items-center bg-[#f3f3f3] font-['Open_Sans','Noto_Sans',sans-serif] text-xs text-black">
      <VegasLogo className="ml-0.5 size-4" />
      <h1 className="ml-1.5 flex-1 font-['Roboto',sans-serif]">Untitled * - VEGAS Pro 14.0</h1>
      <button type="button" aria-label="Minimize" className="flex w-[46px] justify-center">
        <svg viewBox="0 0 12 12" className="size-3" stroke="#000"><path d="M1 5.500h10" /></svg>
      </button>
      <button type="button" aria-label="Restore" className="flex w-[45px] justify-center">
        <svg viewBox="0 0 12 12" className="size-3" fill="none" stroke="#000">
          <rect x="1.500" y="3.500" width="7" height="7" rx="1" />
          <path d="M4 1.500h5.500a1 1 0 011 1V8" />
        </svg>
      </button>
      <button type="button" aria-label="Close" className="mr-0.5 flex w-[46px] justify-center">
        <svg viewBox="0 0 12 12" className="size-3" stroke="#000"><path d="M1 1l10 10M11 1L1 11" /></svg>
      </button>
    </header>
  );
}

const menus = ["File", "Edit", "View", "Insert", "Tools", "Options", "Help"];

const taskApps: { label: string; art: ReactNode; box?: string; dot?: string }[] = [
  {
    label: "Start",
    art: <path d="M0 0h11.500v11.500H0zM12.500 0H24v11.500H12.500zM0 12.500h11.500V24H0zM12.500 12.500H24V24H12.500z" fill="#52c3f5" />,
  },
  {
    label: "Search",
    art: (
      <g fill="none" stroke="#e6e6e6">
        <circle cx="11" cy="10" r="8.500" fill="#4a4a4a" strokeWidth="2" />
        <path d="M17 17l5 5" strokeWidth="2.500" />
      </g>
    ),
  },
  {
    label: "File Explorer",
    dot: "w-1.5 bg-[#999]",
    art: (
      <>
        <path d="M0 3q0-2 2-2h6l3 3h11q2 0 2 2v4H0z" fill="#dba62b" />
        <path d="M0 6h24v15q0 1-1 1H1q-1 0-1-1z" fill="#fbd254" />
        <path d="M5 22v-5q0-2 2-2h10q2 0 2 2v5z" fill="#1f74c4" />
      </>
    ),
  },
  {
    label: "Firefox",
    art: (
      <>
        <path d="M14 4q1-3 4-4 0 4 3 7c4 8-2 16-9 16S-1 18 1 9l3-6 2 4q3-1 8-3z" fill="#ff7a2d" />
        <path d="M14 4q1-3 4-4 0 4 3 7 3 6-1 11 0-9-6-14z" fill="#ffd43c" />
        <path d="M2 14q3 10 12 8c5-1 7-6 6-10-2 5-8 8-12 4z" fill="#f5365b" />
        <circle cx="11" cy="12" r="5" fill="#7951d6" />
        <path d="M4 8q5 0 7 3-4 0-4 3z" fill="#ffa03b" />
      </>
    ),
  },
  {
    label: "Chrome",
    box: "bg-[#482427]",
    dot: "w-1.5 bg-[#f08a80]",
    art: (
      <>
        <circle cx="12" cy="12" r="12" fill="#f7c92e" />
        <path d="M12 12L1.600 6A12 12 0 0122.400 6z" fill="#e53c30" />
        <path d="M12 12L1.600 6A12 12 0 0012 24z" fill="#2aa24c" />
        <path d="M12 6h10.400L17 15l-5 9A12 12 0 0022.400 6z" fill="#f7c92e" />
        <circle cx="12" cy="12" r="6" fill="#fff" />
        <circle cx="12" cy="12" r="4.500" fill="#2e7de9" />
      </>
    ),
  },
  {
    label: "7-Zip",
    dot: "w-1.5 bg-[#999]",
    art: (
      <>
        <path d="M1 4h22v17H1z" fill="#fff" />
        <path d="M3 6h18v13H3z" fill="#000" />
        <path d="M4 8h7L8 17M14 11h5l-5 6h6" fill="none" stroke="#fff" strokeWidth="2" />
      </>
    ),
  },
  {
    label: "Media app",
    dot: "w-1.5 bg-[#999]",
    art: (
      <>
        <path d="M0 0h10v10H0zM12 0h10v10H12z" fill="#777" />
        <text x="5" y="9" textAnchor="middle" fontSize="10" fontWeight="bold" fill="#cf1f55">M</text>
        <text x="17" y="9" textAnchor="middle" fontSize="10" fontWeight="bold" fill="#cf1f55">A</text>
        <path d="M5 11q9-3 18 0l1 6-6 3-4 4-8-1 1-5z" fill="#dcb5ac" />
        <path d="M9 12v4M13 11v5M17 11v4M7 17q6 2 10-1" stroke="#a87d75" fill="none" />
      </>
    ),
  },
];

function Taskbar() {
  return (
    <footer className="flex h-12 shrink-0 items-center bg-[#1b1b1b] pl-[13px] font-['Open_Sans','Noto_Sans',sans-serif] text-white">
      <nav aria-label="Taskbar" className="flex flex-1 gap-1">
        {taskApps.map((app) => (
          <button
            key={app.label}
            type="button"
            aria-label={app.label}
            className={clsx("flex h-10 w-10 flex-col items-center rounded pt-2", app.box)}
          >
            <svg viewBox="0 0 24 24" className="size-6">{app.art}</svg>
            {app.dot && <span className={clsx("mt-1 h-[3px] rounded-full", app.dot)} />}
          </button>
        ))}
        <button type="button" aria-label="VEGAS Pro" className="flex h-10 w-10 flex-col items-center rounded bg-[#2a2a2a] pt-2">
          <VegasLogo className="size-6" />
          <span className="mt-1 h-[3px] w-4 rounded-full bg-[#e58b68]" />
        </button>
      </nav>
      <div className="flex items-center">
        <button type="button" aria-label="Show hidden icons" className="mr-3.5">
          <svg viewBox="0 0 12 12" className="size-3" fill="none" stroke="#fff" strokeWidth="1.500"><path d="M1 9l5-5 5 5" /></svg>
        </button>
        <svg viewBox="0 0 18 16" className="mr-3.5 h-4 w-[18px]">
          <path d="M4 13a4 4 0 010-7 5 5 0 019-1 4 4 0 012 8z" fill="#777" />
          <path d="M2 2l14 13" stroke="#eee" strokeWidth="1.500" />
        </svg>
        <svg viewBox="0 0 18 18" className="mr-1.5 size-[18px]" fill="none" stroke="#fff" strokeWidth="1.300">
          <path d="M11 2H1v11h14V9M5 16h7M8 13v3M12 1h4v5h-4zM14 6v3" />
        </svg>
        <svg viewBox="0 0 18 18" className="mr-[18px] size-[18px]" fill="none" stroke="#fff" strokeWidth="1.200">
          <path d="M1 7h3l4-4v12l-4-4H1zM10 6q2 3 0 6M12 4q4 5 0 10" />
          <path d="M15 2q5 7 0 14" stroke="#777" />
        </svg>
        <time className="whitespace-nowrap text-right text-[11px] leading-4">11:27 AM<br />8/11/2023</time>
        <span className="ml-2 mr-5 flex size-4 items-center justify-center rounded-full bg-[#f0796b] text-[10px] text-black">6</span>
      </div>
    </footer>
  );
}

export default function App() {
  return (
    <div className="flex h-screen min-h-[700px] w-full flex-col overflow-hidden bg-[#868686] font-['Roboto','Noto_Sans',sans-serif] text-[11px] text-[#111]">
      <TitleBar />
      <nav aria-label="Menu" className="flex h-5 shrink-0 items-center gap-3 bg-white pl-[7px] font-['Open_Sans','Noto_Sans',sans-serif] text-xs text-black">
        {menus.map((m) => (
          <button key={m} type="button">{m}</button>
        ))}
      </nav>
      <div className="flex h-[37px] shrink-0 items-center border-b border-[#a2a2a2] pl-[3px]">
        <Tool name="newFile" label="New" />
        <Tool name="folder" label="Open" />
        <Tool name="save" label="Save" />
        <Tool name="saveAs" label="Save as" />
        <Tool name="render" label="Render as" />
        <Tool name="gear" label="Properties" />
        <Sep />
        <Tool name="cut" label="Cut" off />
        <Tool name="copy" label="Copy" off />
        <Tool name="paste" label="Paste" off />
        <Sep />
        <Tool name="undo" label="Undo" className="ml-1 w-6" />
        <Tool name="down" label="Undo history" className="w-5" />
        <Tool name="redo" label="Redo" off />
        <Tool name="down" label="Redo history" off className="w-[17px]" />
        <Sep />
        <Tool name="hand" label="Tutorials" />
        <Sep />
        <Tool name="help" label="What's this" />
      </div>
      <main className="flex min-h-0 flex-1 flex-col">
        <div className="flex h-[341px] shrink-0 border-b-2 border-[#a2a2a2]">
          <PluginPanel />
          <EffectPanel />
          <PreviewPanel />
          <MasterPanel />
        </div>
        <div className="flex min-h-0 flex-1">
          <TrackList />
          <Timeline />
        </div>
      </main>
      <div className="flex h-[22px] shrink-0 items-center justify-end pr-1">
        <p className="h-[17px] w-[223px] border border-[#a2a2a2] border-l-[#666] border-t-[#666] pl-px leading-4">
          Record Time (2 channels): 48:55:15
        </p>
      </div>
      <Taskbar />
    </div>
  );
}
